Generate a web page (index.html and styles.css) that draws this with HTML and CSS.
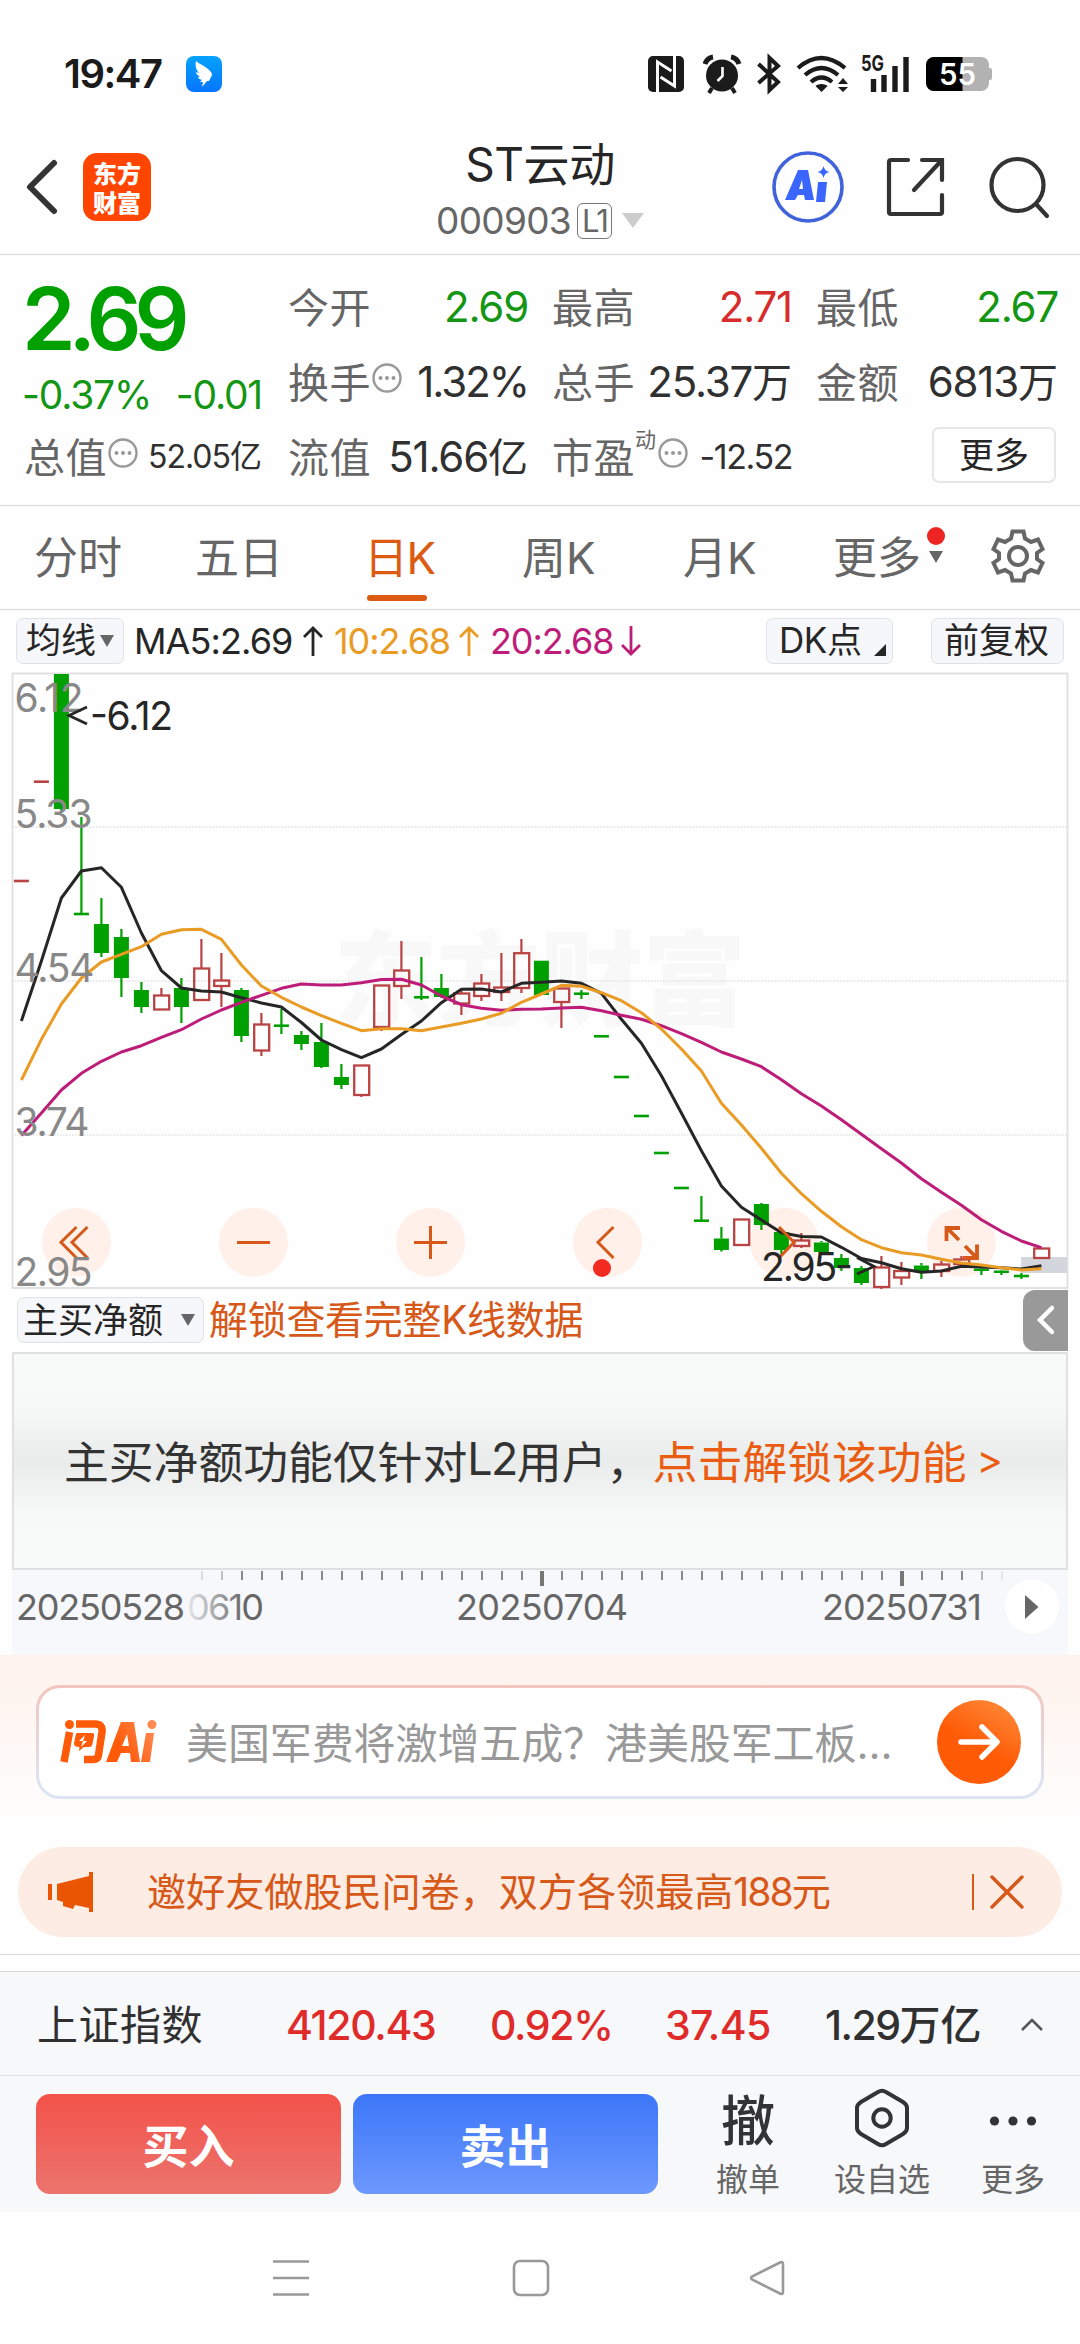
FILE: index.html
```html
<!DOCTYPE html>
<html lang="zh-CN">
<head>
<meta charset="utf-8">
<title>ST云动 000903</title>
<link rel="stylesheet" href="styles.css">
</head>
<body>
<div class="status">
  <span class="clock">19:47</span>
  <svg class="wing" width="36" height="36" viewBox="0 0 36 36"><defs><linearGradient id="wg" x1="0" y1="0" x2="0" y2="1"><stop offset="0" stop-color="#06a2ff"/><stop offset="1" stop-color="#0675ff"/></linearGradient></defs><rect width="36" height="36" rx="8" fill="url(#wg)"/><path d="M10 5c3 3 10 5 14 10 2 2 2 3 2 4l-3 6h-2l-5 6 1-5-3 0 2-2c-3-1-4-2-4-3l2 0c-3-2-4-4-4-5l3 1c-3-3-4-8-3-12z" fill="#fff"/></svg>
  <span class="grow"></span>
  <svg width="36" height="36" viewBox="0 0 36 36"><rect width="36" height="36" rx="5" fill="#1b1b1b"/><path d="M9.500 36V6l14 9M26.500 0v30l-14-9" fill="none" stroke="#fff" stroke-width="3"/></svg>
  <svg class="i-alarm" width="38" height="38" viewBox="0 0 38 38" fill="none" stroke="#1b1b1b"><circle cx="19" cy="20.500" r="16" fill="#1b1b1b" stroke="none"/><path d="M2 9Q4 3 10 2M36 9Q34 3 28 2" stroke-width="5"/><path d="M9 33l-3 5M29 33l3 5" stroke-width="4"/><path d="M19.500 12v9l-5 5" stroke="#fff" stroke-width="2.600"/></svg>
  <svg class="i-bt" width="24" height="38" viewBox="0 0 24 38"><path d="M1.500 9L21 27 12.500 35V3L21 11 1.500 28" fill="none" stroke="#1b1b1b" stroke-width="4"/></svg>
  <svg class="i-wifi" width="50" height="38" viewBox="0 0 50 38" fill="none" stroke="#1b1b1b" stroke-width="4.200"><path d="M1 13Q24-7 48 13M8 20Q24.500 6 41 20M14 27Q24.500 18 35 27"/><path d="M24.500 29c3 0 5 1 6 2l-6 6-6-6c1-1 3-2 6-2zM46 23l5 6h-10zM46 37l5-5h-10z" fill="#1b1b1b" stroke="none"/></svg>
  <svg class="i-5g" width="48" height="38" viewBox="0 0 48 38"><text x="0" y="16" class="t5g" textLength="23" lengthAdjust="spacingAndGlyphs">5G</text><path d="M12.500 24v13M23 20v17M34 11v26M45 2v35" stroke="#1b1b1b" stroke-width="5.400"/></svg>
  <svg class="i-bat" width="66" height="34" viewBox="0 0 66 34"><defs><clipPath id="bc"><rect width="63" height="34" rx="8"/></clipPath></defs><rect x="61" y="11" width="5" height="12" rx="2" fill="#b2b2b2"/><g clip-path="url(#bc)"><rect width="63" height="34" fill="#b2b2b2"/><rect width="36.500" height="34" fill="#000"/></g><text x="13" y="28" class="tbat" textLength="37" lengthAdjust="spacingAndGlyphs">55</text></svg>
</div>

<header class="head">
  <div class="head-l">
    <svg width="30" height="54" viewBox="0 0 30 54"><path d="M27 3L3 27 27 51" fill="none" stroke="#333" stroke-width="6" stroke-linecap="round" stroke-linejoin="round"/></svg>
    <div class="brand"><span>东方</span><span>财富</span></div>
  </div>
  <div class="head-c">
    <div class="title">ST云动</div>
    <div class="code"><span class="codenum">000903</span><span class="lv">L1</span><i class="tri big"></i></div>
  </div>
  <div class="head-r">
    <svg width="74" height="74" viewBox="0 0 74 74"><circle cx="37" cy="37" r="34" fill="none" stroke="#4063dc" stroke-width="3.600"/><path d="M27 20h10l6 30h-9l-1-5h-6l-3 5h-10zM31 30l-3 9h4zM47 32h9l-2 20h-9zM52.500 16q1 5 6 6-5 1-6 6-1-5-6-6 5-1 6-6z" fill="#3a66ff" fill-rule="evenodd"/></svg>
    <svg class="i-share" width="60" height="60" viewBox="0 0 60 60" fill="none" stroke="#333" stroke-width="4.200" stroke-linecap="round"><path d="M22 3H5Q3 3 3 5V55Q3 57 5 57H54Q56 57 56 55V38M36 3H56V23M55 4L28 33"/></svg>
    <svg class="i-find" width="60" height="62" viewBox="0 0 60 62" fill="none" stroke="#333" stroke-width="4.200" stroke-linecap="round"><circle cx="28.500" cy="29" r="26"/><path d="M47 48L58 60"/></svg>
  </div>
</header>

<section class="quote">
  <div class="q-main">
    <div class="price">2.69</div>
    <div class="chg"><span>-0.37%</span><span>-0.01</span></div>
    <div class="cell"><span class="lab">总值</span><svg class="tip" viewBox="0 0 30 30"><use href="#tip"/></svg><span class="val sm">52.05<b>亿</b></span></div>
  </div>
  <div class="q-grid">
    <div class="cell"><span class="lab">今开</span><span class="val green">2.69</span></div>
    <div class="cell"><span class="lab">最高</span><span class="val red">2.71</span></div>
    <div class="cell"><span class="lab">最低</span><span class="val green">2.67</span></div>
    <div class="cell"><span class="lab">换手</span><svg class="tip" viewBox="0 0 30 30"><use href="#tip"/></svg><span class="val tight">1.32%</span></div>
    <div class="cell"><span class="lab">总手</span><span class="val">25.37<b>万</b></span></div>
    <div class="cell"><span class="lab">金额</span><span class="val">6813<b>万</b></span></div>
    <div class="cell"><span class="lab">流值</span><span class="val">51.66<b>亿</b></span></div>
    <div class="cell"><span class="lab">市盈</span><span class="dyn">动</span><svg class="tip" viewBox="0 0 30 30"><use href="#tip"/></svg><span class="val sm2">-12.52</span></div>
    <div class="cell end"><span class="more">更多</span></div>
  </div>
</section>

<nav class="tabs">
  <span>分时</span><span>五日</span><span class="on">日K</span><span>周K</span><span>月K</span>
  <span class="tmore">更多<em><u></u><i class="tri"></i></em></span>
  <svg class="gear" width="54" height="54" viewBox="-27 -27 54 54" fill="none" stroke="#666" stroke-width="4"><circle r="9"/><path d="M-5.500-24.500H5.500L7-17.500 13-14 20-16.500 24.500-7 19 -3V3L24.500 7 20 16.500 13 14 7 17.500 5.500 24.500H-5.500L-7 17.500-13 14-20 16.500-24.500 7-19 3V-3L-24.500-7-20-16.500-13-14-7-17.500Z"/></svg>
</nav>

<div class="mabar">
  <span class="pill p1">均线<i class="tri"></i></span>
  <span class="ma m5">MA5:2.69</span><svg class="arr a1" viewBox="0 0 20 30"><path d="M10 30V2M1 11l9-9 9 9"/></svg>
  <span class="ma m10">10:2.68</span><svg class="arr a2" viewBox="0 0 20 30"><path d="M10 30V2M1 11l9-9 9 9"/></svg>
  <span class="ma m20">20:2.68</span><svg class="arr a3" viewBox="0 0 20 30"><path d="M10 0V28M1 19l9 9 9-9"/></svg>
  <span class="grow"></span>
  <span class="pill p2">DK点<i class="corner"></i></span>
  <span class="pill p3">前复权</span>
</div>

<svg class="chart" id="chart" width="1080" height="617" viewBox="0 672 1080 617">
  <g fill="#f8f8f8"><text class="wm" x="334" y="1018" textLength="412">东方财富</text></g>
  <path d="M12 827H1067M12 981H1067M12 1135H1067" stroke="#e2e2e2" stroke-width="1.500" stroke-dasharray="1.500 1.500"/>
  <path d="M12.500 673.500H1067.500V1288H12.500Z" fill="none" stroke="#e1e1e1" stroke-width="2"/>
  <rect x="1021" y="1257" width="46" height="16" fill="#d3d7dd"/>
  <g fill="#fff0e9"><circle cx="76.500" cy="1242.300" r="34.500"/><circle cx="253.500" cy="1242.300" r="34.500"/><circle cx="430.500" cy="1242.300" r="34.500"/><circle cx="607.500" cy="1242.300" r="34.500"/><circle cx="784.500" cy="1242.300" r="34.500"/><circle cx="961.500" cy="1242.300" r="34.500"/></g>
  <g id="candles"></g>
  <g id="lines" fill="none" stroke-width="3" stroke-linejoin="round"></g>
  <g fill="none" stroke="#d6591a" stroke-width="3"><path d="M76.500 1227L61 1242.300 76.500 1258M87.500 1227L72 1242.300 87.500 1258M237 1242.500H270M414 1242.500H447M430.500 1226V1259M613.500 1227L598 1242.300 613.500 1258M779 1227L794 1242.300 779 1258"/><path stroke-width="3.800" d="M960 1228H946.500V1241M947 1228L959 1240M963 1258H977V1244.500M977 1258L965 1246"/></g>
  <circle cx="602" cy="1268" r="9" fill="#f12a22"/>
  <g class="axis" fill="#888"><text x="14.500" y="712" textLength="69">6.12</text><text x="14.500" y="828" textLength="78">5.33</text><text x="14.500" y="982" textLength="80">4.54</text><text x="14.500" y="1135.500" textLength="75">3.74</text><text x="14.500" y="1286" textLength="78">2.95</text></g>
  <g class="axis" fill="#262626"><text x="90" y="730" textLength="83">-6.12</text><text x="761" y="1281" textLength="92">2.95-</text></g>
  <path d="M87 707L69 715.500 87 724M857 1257.500L874 1266.500 857 1274" fill="none" stroke="#262626" stroke-width="2.800"/>
</svg>

<div class="subbar">
  <span class="pill p4">主买净额<i class="tri"></i></span>
  <span class="unlock">解锁查看完整K线数据</span>
  <span class="grow"></span>
  <span class="fold"><svg width="18" height="30" viewBox="0 0 18 30"><path d="M15 3L3 15 15 27" fill="none" stroke="#fff" stroke-width="4.500" stroke-linecap="round"/></svg></span>
</div>

<div class="l2"><span>主买净额功能仅针对</span><span class="l2b">L2</span><span>用户，</span><span class="go">点击解锁该功能</span><span class="go gt">&gt;</span></div>

<svg class="dates" width="1056" height="85" viewBox="12 1571 1056 85">
  <defs><linearGradient id="fade" gradientUnits="userSpaceOnUse" x1="186" x2="245" y1="0" y2="0"><stop offset="0" stop-color="#666" stop-opacity=".1"/><stop offset="1" stop-color="#666"/></linearGradient></defs>
  <rect x="12" y="1571.500" width="1056" height="85" fill="#f7f8fb"/>
  <g id="ticks"></g>
  <g class="date" fill="#666"><text x="16" y="1620.500" textLength="169">20250528</text><text x="187" y="1620.500" textLength="77" fill="url(#fade)">0610</text><text x="456" y="1620.500" textLength="172">20250704</text><text x="822" y="1620.500" textLength="160">20250731</text></g>
  <circle cx="1032" cy="1607.500" r="27" fill="#fff"/><path d="M1025 1596L1038.500 1608 1025 1620Z" fill="#666"/>
</svg>

<section class="ask">
  <div class="askbox">
    <svg width="98" height="44" viewBox="0 0 98 44"><defs><linearGradient id="ag" gradientUnits="userSpaceOnUse" x1="62" y1="30" x2="98" y2="10"><stop offset="0" stop-color="#ff5a08"/><stop offset="1" stop-color="#ff8b55"/></linearGradient></defs><g fill="none" stroke="#ff5a08" stroke-width="7.500"><path d="M10.500 12L5 42M17 4H36Q44 4 43 12L39.500 35Q39 39.500 34 39.500H25"/></g><circle cx="10.500" cy="4.500" r="4.500" fill="#ff5a08"/><path d="M18 13h15q2.500 0 2 3l-1.500 8q-.500 3-3.500 3h-5l-5 4 .500-4q-6 0-5.500-4l1.500-7q.500-3 1.500-3z" fill="#ff5a08"/><path d="M26 15l-6 6h4l-2 6 6-6h-4z" fill="#fff"/><path d="M62 2h13l6 40h-9l-1-9h-9l-4 9h-11zM68 14l-5 12h7zM87 13h8l-4 29h-9zM93 0a4.500 4.500 0 1 1-.1 9a4.500 4.500 0 0 1 .1-9z" fill="url(#ag)" fill-rule="evenodd"/></svg>
    <span class="q">美国军费将激增五成？港美股军工板...</span>
    <span class="send"><svg width="44" height="40" viewBox="0 0 44 40"><path d="M4 20H39M25 5L40 20 25 35" fill="none" stroke="#fff" stroke-width="5.500" stroke-linecap="round" stroke-linejoin="round"/></svg></span>
  </div>
  <div class="banner">
    <svg width="46" height="40" viewBox="0 0 46 40"><path d="M0 12h4v16H0zM9 12L41 4V0h4v40h-4v-4L27 33l-2 4-10-3v-4l-6-2z" fill="#ea5504"/></svg>
    <span class="bt">邀好友做股民问卷，双方各领最高<b>188</b>元</span>
    <span class="x"><svg width="34" height="34" viewBox="0 0 34 34"><path d="M2 2L32 32M32 2L2 32" stroke="#d6591a" stroke-width="3.400" stroke-linecap="round"/></svg></span>
  </div>
</section>

<footer class="foot">
  <div class="index">
    <span class="i1">上证指数</span><span class="r i2">4120.43</span><span class="r i3">0.92%</span><span class="r i4">37.45</span><span class="i5">1.29<b>万亿</b></span>
    <svg width="24" height="14" viewBox="0 0 24 14"><path d="M2 12L12 2 22 12" fill="none" stroke="#555" stroke-width="2.600"/></svg>
  </div>
  <div class="trade">
    <span class="btn buy">买入</span><span class="btn sell">卖出</span>
    <div class="act a-c"><strong>撤</strong><span>撤单</span></div>
    <div class="act a-s"><svg width="56" height="60" viewBox="0 0 56 60" fill="none" stroke="#333" stroke-width="4"><path d="M24 4Q28 1.500 32 4L49 14Q53 16.500 53 20V40Q53 43.500 49 46L32 56Q28 58.500 24 56L7 46Q3 43.500 3 40V20Q3 16.500 7 14Z"/><circle cx="28" cy="30" r="8.700"/></svg><span>设自选</span></div>
    <div class="act a-m"><svg width="56" height="60" viewBox="0 0 56 60"><g fill="#333"><circle cx="9.500" cy="33" r="4.600"/><circle cx="28" cy="33" r="4.600"/><circle cx="46.500" cy="33" r="4.600"/></g></svg><span>更多</span></div>
  </div>
</footer>

<div class="sysnav">
  <svg width="38" height="38" viewBox="0 0 38 38"><path d="M1 2.500H37M1 19H37M1 35.500H37" stroke="#999" stroke-width="2.600"/></svg>
  <svg width="38" height="38" viewBox="0 0 38 38"><rect x="2" y="2" width="34" height="34" rx="6" fill="none" stroke="#999" stroke-width="2.600"/></svg>
  <svg width="38" height="38" viewBox="0 0 38 38"><path d="M34 5V33Q34 36 31 34.500L3 20.500Q1 19 3 17.500L31 3.500Q34 2 34 5Z" fill="none" stroke="#999" stroke-width="2.600"/></svg>
</div>

<svg width="0" height="0" class="defs"><symbol id="tip" viewBox="0 0 30 30"><circle cx="15" cy="15" r="13.500" fill="none" stroke="#999" stroke-width="2.400"/><g fill="#999"><circle cx="8.500" cy="15" r="2"/><circle cx="15" cy="15" r="2"/><circle cx="21.500" cy="15" r="2"/></g></symbol></svg>
<script src="chart.js"></script>
</body>
</html>
```
FILE: styles.css
```css
* { box-sizing: border-box; }
body {
  margin: 0; width: 1080px; height: 2344px; background: #fefefe; color: #262626; overflow: hidden;
  font-family: Inter, "Noto Sans CJK SC", sans-serif; display: flex; flex-direction: column;
}
svg { display: block; flex: none; overflow: visible; }
.defs { position: absolute; }
span { white-space: nowrap; }
b { font-weight: inherit; letter-spacing: 0; }
.grow { flex: 1; }
.tri { display: inline-block; border: 7px solid transparent; border-top: 12px solid #666; border-bottom: 0; }

.status { height: 120px; padding: 28px 88px 0 64px; display: flex; align-items: center; }
.clock { font-size: 40px; font-weight: 600; color: #1b1b1b; letter-spacing: -1.500px; width: 122px; }
.i-alarm { margin-left: 19px; }
.i-bt { margin-left: 16px; }
.i-wifi { margin-left: 16px; }
.i-5g { margin-left: 14px; }
.i-bat { margin-left: 17px; }
.t5g { font: 700 22px Inter; fill: #1b1b1b; }
.tbat { font: 600 30px Inter; fill: #fff; }

.head { height: 135px; border-bottom: 1.500px solid #d6d6d6; display: grid; grid-template-columns: 1fr auto 1fr; align-items: center; }
.head-l { display: flex; align-items: center; padding-left: 27px; gap: 26px; }
.brand { width: 68px; height: 68px; border-radius: 14px; background: #ff4500; color: #fff; display: flex; flex-direction: column; align-items: center; justify-content: center; font: 900 24px/29px "Noto Sans CJK SC", sans-serif; }
.brand span { height: 29px; }
.head-c { display: flex; flex-direction: column; align-items: center; padding-top: 10px; }
.title { font-size: 46px; line-height: 58px; height: 58px; font-weight: 400; letter-spacing: -.4px; }
.code { display: flex; align-items: center; height: 56px; color: #666; }
.codenum { font-size: 37px; letter-spacing: -.7px; }
.lv { font-size: 31px; width: 35px; height: 36px; line-height: 34px; border: 1.500px solid #777; border-radius: 6px; text-align: center; letter-spacing: -2px; margin-left: 6px; }
.tri.big { border-width: 15px 11px 0; border-top-color: #ccc; margin-left: 10px; }
.head-r { display: flex; justify-content: flex-end; align-items: center; padding-right: 31px; }
.i-share { margin-left: 41px; }
.i-find { margin-left: 43px; }

.quote { height: 251px; padding: 15px 22px 0 24px; display: flex; border-bottom: 1.500px solid #d6d6d6; }
.q-main { width: 238px; }
.price { height: 99px; line-height: 99px; font-size: 86px; font-weight: 600; color: #00a000; letter-spacing: -7px; margin-left: -2px; }
.chg { height: 51px; line-height: 51px; font-size: 39px; color: #149614; display: flex; justify-content: space-between; letter-spacing: -1.200px; margin-left: -2px; }
.cell { height: 75px; display: flex; align-items: center; }
.q-grid { flex: 1; margin-left: 26px; display: grid; grid-template-columns: 240px 240px 242px; column-gap: 24px; align-content: start; }
.lab { font-size: 41px; color: #666; letter-spacing: .5px; margin-top: -5px; }
.tip { width: 30px; height: 30px; margin: -8px 0 0 1px; }
.val { font-size: 42px; margin-left: auto; color: #303030; letter-spacing: -1.200px; line-height: 60px; }
.val.tight { letter-spacing: -2px; }
.val b { font-size: 40px; }
.val.sm { font-size: 32px; letter-spacing: -1px; }
.val.sm b { font-size: 32px; }
.val.sm2 { font-size: 34px; letter-spacing: -1.400px; }
.val.green { color: #149614; }
.val.red { color: #d62c2c; }
.dyn { font-size: 21px; color: #666; margin: -38px 0 0 0; }
.dyn + .tip { margin-left: 2px; }
.end { justify-content: flex-end; padding-right: 2px; }
.more { width: 124px; height: 56px; line-height: 52px; border: 2px solid #e6e6e6; border-radius: 7px; font-size: 35px; text-align: center; margin-top: -5px; }

.tabs { height: 104px; border-bottom: 1.500px solid #d6d6d6; display: flex; align-items: center; font-size: 44px; color: #666; padding-left: 34px; }
.tabs > span { height: 104px; line-height: 106px; width: 161px; }
.tabs .on { color: #dc5a12; display: flex; flex-direction: column; width: 155px; margin-left: 8px; letter-spacing: -1.500px; }
.tabs .on::after { content: ""; width: 60px; height: 6px; border-radius: 3px; background: #dc5a12; margin: -16px 0 0 3px; }
.tabs > span:nth-child(4) { width: 161px; margin-left: 3px; }
.tabs > span:nth-child(5) { width: 150px; }
.tabs > .tmore { display: flex; width: auto; }
.tmore em { display: flex; flex-direction: column; align-items: center; margin: 22px 0 0 6px; }
.tmore u { width: 18px; height: 18px; border-radius: 9px; background: #ee2424; margin-bottom: 6px; }
.gear { margin: -2px 0 0 46px; }

.mabar { height: 62px; display: flex; align-items: center; padding: 0 16px; }
.pill { height: 46px; line-height: 43px; border: 1.500px solid #dfe2e6; border-radius: 7px; background: #f6f7fa; font-size: 35px; display: flex; align-items: center; }
.p1 { width: 108px; padding-left: 9px; }
.p1 .tri { margin-left: 4px; }
.ma { font-size: 36px; letter-spacing: -1.100px; line-height: 60px; }
.m5 { margin-left: 10px; width: 169px; letter-spacing: -.9px; }
.m10 { color: #e99b24; width: 125px; }
.m20 { color: #bd1d78; width: 131px; }
.arr { width: 20px; height: 30px; fill: none; stroke-width: 2.800; }
.a1 { stroke: #262626; margin-right: 11px; }
.a2 { stroke: #e99b24; margin-right: 11px; }
.a3 { stroke: #bd1d78; }
.p2 { width: 127px; padding-left: 12px; margin-right: 38px; letter-spacing: -.4px; }
.corner { border-left: 12px solid transparent; border-bottom: 12px solid #262626; margin: 18px 0 0 12px; }
.p3 { width: 133px; padding-left: 12px; }

.chart .wm { font: 900 103px "Noto Sans CJK SC"; }
.axis { font-size: 39px; }
.date { font-size: 36px; }

.subbar { height: 63px; display: flex; align-items: center; padding: 0 12px 0 17px; }
.p4 { width: 187px; padding-left: 5px; }
.p4 .tri { margin-left: auto; margin-right: 8px; }
.unlock { color: #d6591a; font-size: 39px; margin-left: 5px; line-height: 60px; letter-spacing: -.3px; }
.fold { width: 45px; height: 61px; background: #999; border-radius: 12px 0 0 12px; display: flex; align-items: center; justify-content: center; }

.l2 { height: 219px; margin: 0 12px; border: 2px solid #dfe1e0; display: flex; align-items: center; font-size: 44.800px; color: #333; padding: 0 0 4px 50px;
  background: linear-gradient(#f8faf9 0, #f7f8f8 25%, #ebedec 47%, #ebedec 53%, #f7f8f8 75%, #f8faf9 100%); }
.l2b { letter-spacing: -1.500px; }
.l2 .go { color: #ea5c12; }
.l2 .gt { margin-left: 10px; font-size: 40px; }
.l2 span:nth-child(3) { width: 136px; }

.dates { margin: 0 12px; }

.ask { height: 300px; background: linear-gradient(#fff2ec 0, #fefefe 170px); padding: 30px 18px 0; border-bottom: 1.500px solid #d6d6d6; }
.askbox { height: 114px; margin: 0 18px; border: 3px solid transparent; border-radius: 24px; display: flex; align-items: center; padding: 0 20px;
  background: linear-gradient(#fff, #fff) padding-box, linear-gradient(#f2c6bf 5%, #dde4f1 90%) border-box; }
.q { font-size: 42px; letter-spacing: -.1px; color: #999; margin-left: 29px; flex: 1; line-height: 60px; padding-top: 4px; }
.send { width: 84px; height: 84px; border-radius: 50%; background: linear-gradient(30deg, #ff5a05 45%, #ff9040); display: flex; align-items: center; justify-content: center; }
.banner { margin-top: 48px; height: 90px; border-radius: 45px; background: #fdece3; display: flex; align-items: center; padding: 0 38px 0 30px; color: #d6591a; }
.bt { font-size: 39.200px; letter-spacing: -.1px; margin-left: 53px; flex: 1; line-height: 60px; }
.bt b { letter-spacing: -2px; }
.x { height: 36px; border-left: 2px solid #d6591a; padding-left: 16px; display: flex; align-items: center; }

.foot { margin-top: 16px; height: 241px; border-top: 1.500px solid #d6d6d6; background: #f7f8fa; }
.index { height: 104px; border-bottom: 1.500px solid #e0e1e4; display: flex; align-items: center; padding: 3px 36px 0 37px; font-size: 41px; color: #303030; line-height: 60px; }
.index .r { color: #e02b2b; font-weight: 500; letter-spacing: -1.300px; }
.index .i1 { width: 249px; letter-spacing: .5px; }
.index .i2 { width: 204px; }
.index .i3 { width: 175px; }
.index .i4 { width: 160px; letter-spacing: -.6px; }
.index .i5 { width: 195px; font-weight: 500; letter-spacing: -1.500px; }
.index .i5 b { font-size: 41px; }
.trade { height: 134px; display: flex; padding: 18px 0 0 36px; }
.btn { width: 305px; height: 100px; border-radius: 14px; color: #fff; font: 700 46px/99px "Noto Sans CJK SC"; text-align: center; margin-right: 12px; }
.buy { background: linear-gradient(#f3524a, #eb746d); }
.sell { background: linear-gradient(#3c76f8, #6d98fe); }
.act { display: flex; flex-direction: column; align-items: center; font-size: 32px; color: #666; line-height: 40px; }
.act span { margin-top: 12px; }
.act svg { margin-top: -6px; height: 60px; }
.act strong { font-size: 54px; font-weight: 500; color: #333; height: 54px; line-height: 56px; }
.a-c { margin-left: 46px; }
.a-s { margin-left: 54px; }
.a-m { margin-left: 51px; }

.sysnav { height: 132px; display: flex; align-items: center; padding-left: 272px; gap: 202px; }
.sysnav svg:last-child { margin-left: -3px; }
```
FILE: chart.js
```js
const NS = 'http://www.w3.org/2000/svg';
const X0 = 21.4, STEP = 20;
const RED = '#b94242', GREEN = '#00a000';

// kind, wick top, body top, body bottom, wick bottom
const candles = [
  ['r',881,881,881,881],['r',781.7,781.7,781.7,781.7],['g',674,674,809,811],['g',817,914,914,914],
  ['g',898,924,953,957],['g',929,937,978,997],['g',982,990,1007,1013],['r',988,995,1009.5,1009.5],
  ['g',978,988,1007,1023],['r',939,968,1000,1000],['r',953,980,986,1007],['g',988,990,1036,1042],
  ['r',1013,1024,1050.5,1056],['g',1009,1025.7,1025.7,1034],['g',1031,1035,1044,1050],['g',1023,1042,1067,1068],
  ['g',1064,1077,1085,1089],['r',1065,1065,1095,1097],['r',985,985,1027,1031],['r',941,970,986,999],
  ['g',957,997.3,997.3,1000],['g',974,988,997,998],['r',989,993,1003.5,1015],['r',974,983,996,1001],
  ['r',953,987,992,1001],['r',939,952.7,988,993],['g',960.7,960.7,995,995],['r',988,988,1002,1028],
  ['g',990,993.7,993.7,999],['g',1036.3,1036.3,1036.3,1036.3],['g',1077,1077,1077,1077],['g',1116,1116,1116,1116],
  ['g',1153,1153,1153,1153],['g',1188,1188,1188,1188],['g',1196,1220.7,1220.7,1220.7],['g',1227,1238.5,1250,1251.5],
  ['r',1219,1219,1245,1245],['g',1203,1204,1225,1230],['g',1232,1232,1250,1254],['r',1233,1240,1246,1248],
  ['g',1241,1242.5,1252,1253],['g',1254,1258,1268,1271],['g',1266,1268,1283,1285],['r',1256,1267,1287,1289],
  ['r',1262,1270.5,1277.5,1285],['g',1263,1265.5,1271,1279],['r',1261,1264,1271,1277],['r',1256,1259,1264,1264],
  ['g',1268,1268.5,1271,1275],['g',1270,1270.5,1273,1275],['g',1273,1276,1276,1279],['r',1248,1248,1258,1258]
];
const averages = {
  '#262626': [1021,961,898,871,867.7,887.3,933,970.7,988,991,992,997.7,1003,1007,1022.5,1040,1049.7,1057.7,1049,1034.5,1021,1002.7,989.3,989,992,983.3,982.3,981,983.3,993.3,1019.3,1043.3,1075.7,1113,1150.7,1186,1207.3,1220,1232.7,1236.5,1237,1247.3,1258.5,1262.7,1268.7,1272.3,1271,1266.3,1267,1267.7,1269,1265.7],
  '#bd1d78': [1135.5,1113,1090,1073.3,1061.3,1052,1045.7,1037.3,1029.7,1019,1010,1002.3,995.3,988.3,984,985,985,982.7,979.5,979.3,985,996,1004.7,1008.3,1010.3,1009.3,1009,1008,1007.3,1010.7,1015.3,1019.3,1025.7,1033.7,1042.3,1052,1059,1066.7,1079.7,1093.7,1106,1119.7,1134.3,1148.7,1163,1178.7,1192.3,1205.3,1219.7,1231.3,1241,1247.7],
  '#e99b24': [1080,1039.3,1004,978,962,954.3,946.7,934.3,929.7,929.3,939.3,965,986,997.3,1007,1015.7,1023.3,1030.7,1028.7,1028.7,1030.7,1027,1023.3,1019,1013.3,1002.3,994,985.3,986.3,992.7,1000.7,1012.7,1029,1049,1071,1103.3,1125,1148.3,1173.3,1193.7,1211.3,1226.7,1239.7,1247.7,1252.7,1255,1259.3,1263,1265,1267.7,1270,1268.7]
};

function add(parent, tag, attrs) {
  const el = document.createElementNS(NS, tag);
  for (const k in attrs) el.setAttribute(k, attrs[k]);
  parent.appendChild(el);
}

const cg = document.getElementById('candles');
candles.forEach(([kind, hi, top, bot, lo], i) => {
  const x = X0 + i * STEP, color = kind === 'r' ? RED : GREEN;
  if (top > hi) add(cg, 'path', { d: `M${x} ${hi}V${top}`, stroke: color, 'stroke-width': 2.2 });
  if (lo > bot) add(cg, 'path', { d: `M${x} ${bot}V${lo}`, stroke: color, 'stroke-width': 2.2 });
  if (bot - top < 1) add(cg, 'path', { d: `M${x - 7.5} ${top}H${x + 7.5}`, stroke: color, 'stroke-width': 2.6 });
  else if (kind === 'g') add(cg, 'rect', { x: x - 7.5, y: top, width: 15, height: bot - top, fill: color });
  else add(cg, 'rect', { x: x - 7.2, y: top + .5, width: 15, height: bot - top - .5, fill: 'none', stroke: color, 'stroke-width': 2.3 });
});

const lg = document.getElementById('lines');
for (const color of Object.keys(averages)) {
  add(lg, 'polyline', { points: averages[color].map((y, i) => `${X0 + i * STEP},${y}`).join(' '), stroke: color });
}

const tg = document.getElementById('ticks');
for (let i = 0; i <= 40; i++) {
  const x = 202 + i * 20, major = i === 17 || i === 35;
  const fade = { 0: .25, 1: .5, 39: .6, 40: .15 }[i] || 1;
  add(tg, 'path', { d: `M${x} 1572V${major ? 1587 : 1581}`, stroke: major ? '#777' : '#888', 'stroke-width': major ? 4 : 2, opacity: fade });
}
```
